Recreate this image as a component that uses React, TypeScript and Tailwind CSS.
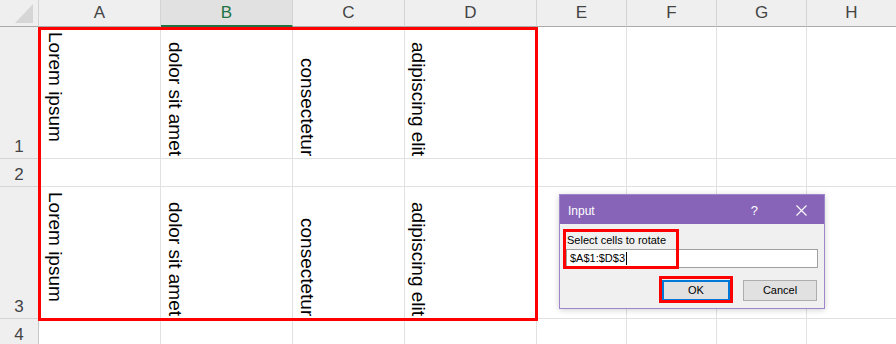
import React from 'react';

const columns = ['A', 'B', 'C', 'D', 'E', 'F', 'G', 'H'];
const words = ['Lorem ipsum', 'dolor sit amet', 'consectetur', 'adipiscing elit'];

// where the rotated text sits inside each of the first four cells
const cellPlace = [
  'flex items-start pt-[5px] pl-[7px]',
  'flex items-end pb-[2px] pl-[5px]',
  'flex items-end pb-[2px] pl-[5px]',
  'flex items-end pb-[2px] pl-[4px]',
];

const rows = [
  { n: '1', text: true },
  { n: '2', text: false },
  { n: '3', text: true },
  { n: '4', text: false },
];

const Corner: React.FC = () => (
  <div className="flex items-end justify-end pr-[4px] pb-[3px] bg-[#efefef] border-r border-r-[#d4d4d4] border-b border-b-[#ababab]">
    <svg width="19" height="19" viewBox="0 0 19 19">
      <polygon points="18,0 18,19 0,19" fill="#d6d6d6" />
    </svg>
  </div>
);

const Sheet: React.FC = () => (
  <div className="grid grid-cols-[39px_122px_132px_112px_132px_90px_90px_90px_90px] grid-rows-[27px_132px_28px_132px_28px]">
    <Corner />
    {columns.map((c) =>
      c === 'B' ? (
        <div
          key={c}
          className="flex items-center justify-center bg-[#e1e1e1] text-[#217346] text-[17px] border-r border-r-[#d4d4d4] border-b-2 border-b-[#217346]"
        >
          {c}
        </div>
      ) : (
        <div
          key={c}
          className="flex items-center justify-center bg-[#efefef] text-[#444] text-[17px] border-r border-r-[#d4d4d4] border-b border-b-[#ababab]"
        >
          {c}
        </div>
      ),
    )}

    {rows.map((r) => (
      <React.Fragment key={r.n}>
        <div className="flex items-end justify-center pb-[3px] bg-[#efefef] text-[#444] text-[17px] leading-none border-r border-r-[#c8c8c8] border-b border-b-[#d4d4d4]">
          {r.n}
        </div>
        {columns.map((c, i) => (
          <div
            key={c}
            className={`border-r border-b border-[#e1e1e1] ${r.text && i < 4 ? cellPlace[i] : ''}`}
          >
            {r.text && i < 4 && (
              <span className="[writing-mode:vertical-rl] text-[19px] leading-none text-black whitespace-nowrap">
                {words[i]}
              </span>
            )}
          </div>
        ))}
      </React.Fragment>
    ))}
  </div>
);

const InputDialog: React.FC = () => (
  <div className="absolute left-[559px] top-[194px] w-[266px] h-[115px] flex flex-col border border-[#9d86c9] bg-[#f0f0f0] shadow-[0_1px_6px_rgba(0,0,0,0.18)]">
    <div className="h-[29px] shrink-0 flex items-center bg-[#8764b8] text-white pl-[8px] pt-[2px]">
      <span className="text-[12px]">Input</span>
      <span className="ml-auto text-[13px] mr-[38px]">?</span>
      <svg width="11" height="11" viewBox="0 0 11 11" className="mr-[17px]">
        <path d="M0.5 0.5 L10.5 10.5 M10.5 0.5 L0.5 10.5" stroke="white" strokeWidth="1.1" />
      </svg>
    </div>
    <div className="flex flex-col px-[6px] pt-[10px]">
      <div className="text-[11px] leading-[13px] text-black pl-[1px] mb-[2px]">Select cells to rotate</div>
      <div className="h-[19px] flex items-center bg-white border border-[#a0a0a0] pl-[3px] text-[11px] text-black">
        <span>$A$1:$D$3</span>
        <span className="w-px h-[13px] bg-black ml-px" />
      </div>
      <div className="flex justify-end mt-[12px] pr-px">
        <button className="w-[68px] h-[21px] mr-[13px] bg-[#e1e1e1] border-2 border-[#0078d7] text-[11px] text-black">
          OK
        </button>
        <button className="w-[74px] h-[21px] bg-[#e1e1e1] border border-[#adadad] text-[11px] text-black">
          Cancel
        </button>
      </div>
    </div>
  </div>
);

export default function App() {
  return (
    <div className="relative w-[896px] h-[344px] overflow-hidden bg-white font-['Liberation_Sans',Arial,sans-serif]">
      <Sheet />
      {/* red highlight boxes drawn over the sheet and dialog */}
      <div className="absolute left-[38px] top-[27px] w-[500px] h-[294px] border-[3px] border-[#ff0000]" />
      <InputDialog />
      <div className="absolute left-[563px] top-[229px] w-[116px] h-[40px] border-[3px] border-[#ff0000]" />
      <div className="absolute left-[659px] top-[276px] w-[74px] h-[27px] border-[3px] border-[#ff0000]" />
    </div>
  );
}
